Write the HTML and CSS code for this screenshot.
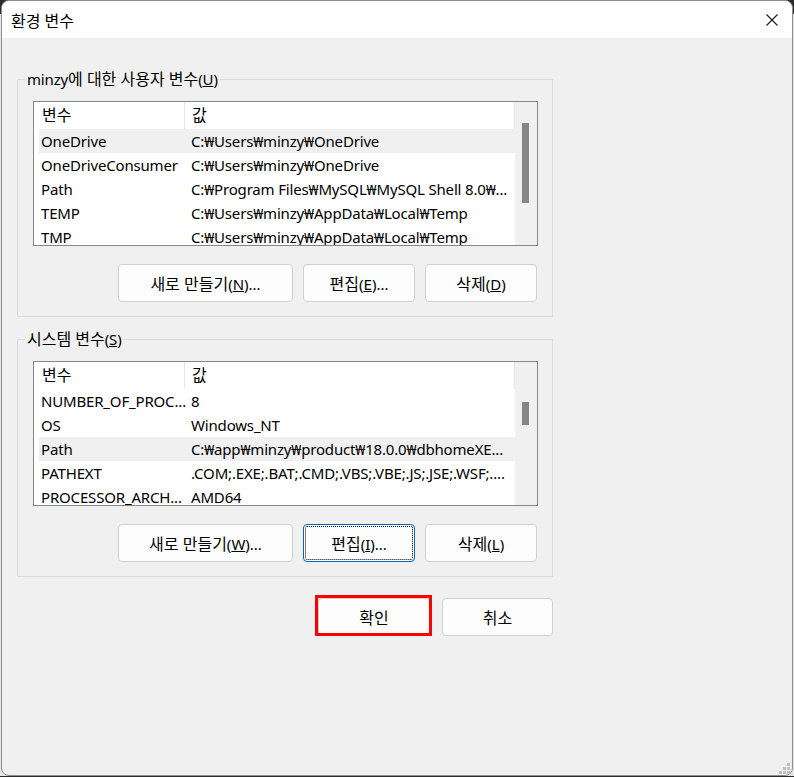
FILE: index.html
```html
<!DOCTYPE html>
<html lang="ko">
<head>
    <meta charset="UTF-8">
    <meta name="viewport" content="width=device-width, initial-scale=1.0">
    <title>환경 변수</title>
    <link rel="stylesheet" href="styles.css">
</head>
<body>
    <div class="window">
        <div class="titlebar">
            <span class="title ko">환경 변수</span>
            <span class="close">
                <svg width="12" height="12" viewBox="0 0 12 12">
                    <path d="M0.5 0.5 L11.5 11.5 M11.5 0.5 L0.5 11.5" stroke="#1a1a1a" stroke-width="1.1" fill="none"/>
                </svg>
            </span>
        </div>

        <div class="content">
            <!-- user variables -->
            <fieldset class="group">
                <legend>minzy<span class="ko">에 대한 사용자 변수</span>(<u>U</u>)</legend>
                <div class="group-body">
                    <div class="list">
                        <div class="list-main">
                            <div class="list-head"><span class="ko">변수</span><span class="ko">값</span></div>
                            <div class="list-body">
                                <div class="row selected"><span>OneDrive</span><span>C:₩Users₩minzy₩OneDrive</span></div>
                                <div class="row"><span>OneDriveConsumer</span><span>C:₩Users₩minzy₩OneDrive</span></div>
                                <div class="row"><span>Path</span><span>C:₩Program Files₩MySQL₩MySQL Shell 8.0₩...</span></div>
                                <div class="row"><span>TEMP</span><span>C:₩Users₩minzy₩AppData₩Local₩Temp</span></div>
                                <div class="row"><span>TMP</span><span>C:₩Users₩minzy₩AppData₩Local₩Temp</span></div>
                            </div>
                        </div>
                        <div class="scrollbar"><div class="thumb thumb-user"></div></div>
                    </div>
                    <div class="actions">
                        <button class="btn btn-wide"><span class="ko">새로 만들기</span>(<u>N</u>)...</button>
                        <button class="btn"><span class="ko">편집</span>(<u>E</u>)...</button>
                        <button class="btn"><span class="ko">삭제</span>(<u>D</u>)</button>
                    </div>
                </div>
            </fieldset>

            <!-- system variables -->
            <fieldset class="group">
                <legend><span class="ko">시스템 변수</span>(<u>S</u>)</legend>
                <div class="group-body">
                    <div class="list">
                        <div class="list-main">
                            <div class="list-head"><span class="ko">변수</span><span class="ko">값</span></div>
                            <div class="list-body">
                                <div class="row"><span>NUMBER_OF_PROC...</span><span>8</span></div>
                                <div class="row"><span>OS</span><span>Windows_NT</span></div>
                                <div class="row selected"><span>Path</span><span>C:₩app₩minzy₩product₩18.0.0₩dbhomeXE...</span></div>
                                <div class="row"><span>PATHEXT</span><span>.COM;.EXE;.BAT;.CMD;.VBS;.VBE;.JS;.JSE;.WSF;....</span></div>
                                <div class="row"><span>PROCESSOR_ARCH...</span><span>AMD64</span></div>
                            </div>
                        </div>
                        <div class="scrollbar"><div class="thumb thumb-system"></div></div>
                    </div>
                    <div class="actions">
                        <button class="btn btn-wide"><span class="ko">새로 만들기</span>(<u>W</u>)...</button>
                        <button class="btn focused"><span class="ko">편집</span>(<u>I</u>)...</button>
                        <button class="btn"><span class="ko">삭제</span>(<u>L</u>)</button>
                    </div>
                </div>
            </fieldset>

            <div class="dialog-actions">
                <button class="btn default"><span class="ko">확인</span></button>
                <button class="btn btn-cancel"><span class="ko">취소</span></button>
            </div>
        </div>

        <svg class="grip" width="11" height="11" viewBox="0 0 11 11">
            <rect x="8" y="0" width="3" height="3"/>
            <rect x="4" y="4" width="3" height="3"/>
            <rect x="8" y="4" width="3" height="3"/>
            <rect x="0" y="8" width="3" height="3"/>
            <rect x="4" y="8" width="3" height="3"/>
            <rect x="8" y="8" width="3" height="3"/>
        </svg>
    </div>
</body>
</html>
```

FILE: styles.css
```css
* {
    box-sizing: border-box;
}
body {
    margin: 0;
    font-family: "Noto Sans", "Noto Sans CJK KR", sans-serif;
    font-size: 15px;
    letter-spacing: -0.17px;
    color: #000;
    background: linear-gradient(#2b2b2b 0, #2b2b2b 14px, #e6e6e6 14px);
}
.ko {
    font-size: 16px;
    letter-spacing: 0;
}
.window {
    position: relative;
    margin-left: 1px;
    width: 792px;
    height: 776px;
    border: 1px solid #8e8e8e;
    border-radius: 8px;
    background: #f0f0f0;
    overflow: hidden;
}
.titlebar {
    display: flex;
    align-items: center;
    justify-content: space-between;
    height: 37px;
    padding-left: 9px;
    background: #fff;
}
.close {
    display: flex;
    align-items: center;
    justify-content: center;
    width: 40px;
    height: 37px;
}
.content {
    padding: 31px 0 0 15px;
}
.group {
    width: 536px;
    min-width: 0;
    margin: 0;
    padding: 0;
    border: 1px solid #dcdcdc;
}
.group + .group {
    margin-top: 12px;
}
.group legend {
    margin-left: 7px;
    padding: 0 2px;
    line-height: 21px;
}
.group-body {
    padding: 11px 14px 14px 15px;
}
.list {
    display: flex;
    width: 505px;
    height: 145px;
    border: 1px solid #828790;
    background: #fff;
}
.list-main {
    flex: 1;
    min-width: 0;
    overflow: hidden;
}
.list-head {
    display: grid;
    grid-template-columns: 151px 1fr;
    height: 27px;
    line-height: 27px;
    border-right: 1px solid #e5e5e5;
}
.list-head span:first-child {
    padding-left: 8px;
    border-right: 1px solid #e5e5e5;
}
.list-head span:last-child {
    padding-left: 7px;
}
.list-body {
    padding-left: 5px;
}
.row {
    display: grid;
    grid-template-columns: 150px 1fr;
    height: 24px;
    line-height: 24px;
    white-space: nowrap;
}
.row span {
    padding-left: 2px;
    overflow: hidden;
}
.row.selected {
    background: #f0f0f0;
}
.scrollbar {
    width: 22px;
    background: #f0f0f0;
}
.thumb {
    width: 7px;
    margin-left: 7px;
    background: #868686;
}
.thumb-user {
    margin-top: 21px;
    height: 80px;
}
.thumb-system {
    margin-top: 40px;
    height: 23px;
}
.actions {
    display: flex;
    justify-content: flex-end;
    gap: 10px;
    margin-top: 18px;
    padding-right: 1px;
}
.btn {
    position: relative;
    width: 112px;
    height: 38px;
    padding: 0;
    border: 1px solid #d0d0d0;
    border-radius: 4px;
    background: #fdfdfd;
    font: inherit;
    color: #000;
}
.btn-wide {
    width: 175px;
}
.btn.focused {
    border-color: #0067c0;
    outline: 1px dotted #000;
    outline-offset: -3px;
}
.dialog-actions {
    display: flex;
    justify-content: flex-end;
    gap: 12px;
    width: 536px;
    margin-top: 21px;
}
/* red marker drawn over the default button */
.btn.default::after {
    content: "";
    position: absolute;
    top: -4px;
    left: -4px;
    right: -3px;
    bottom: -1px;
    border: 3px solid #f00;
}
.btn-cancel {
    width: 111px;
}
.grip {
    position: absolute;
    right: 2px;
    bottom: 1px;
    fill: #c0c0c0;
}
```
